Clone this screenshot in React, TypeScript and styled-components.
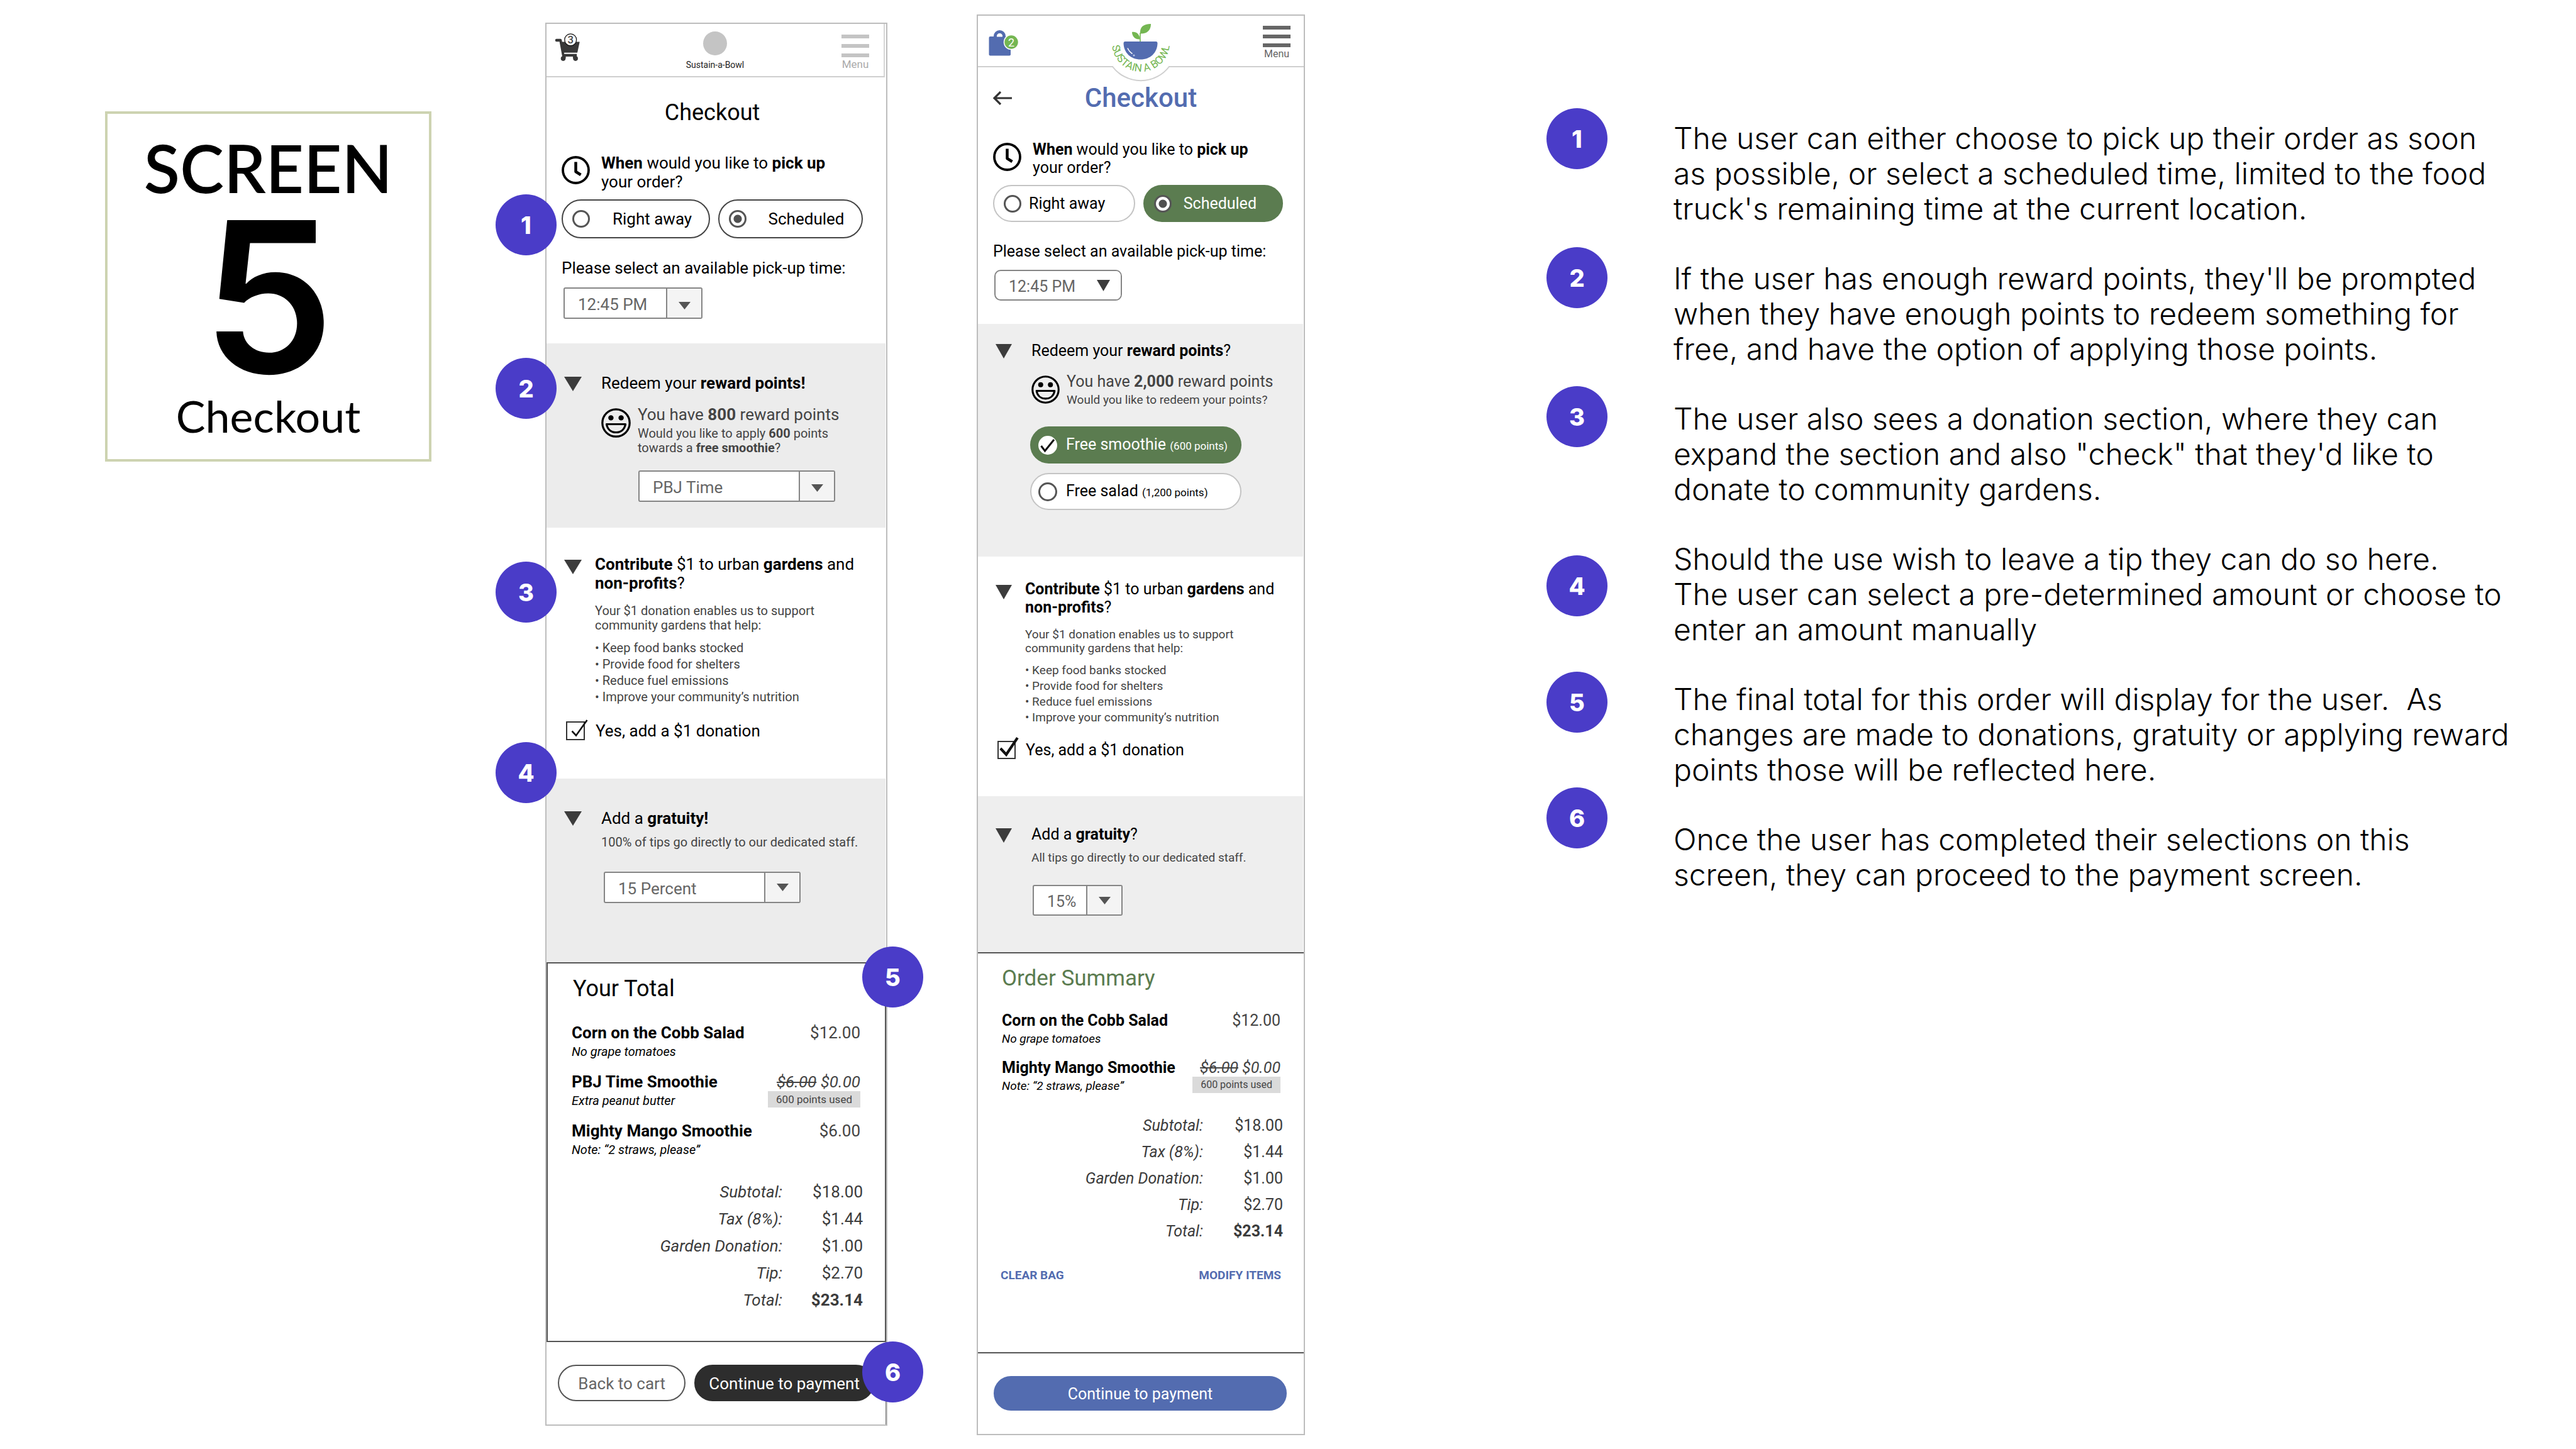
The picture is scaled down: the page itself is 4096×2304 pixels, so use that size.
import React, { useState } from 'react';
import styled, { createGlobalStyle, css } from 'styled-components';

const colors = {
  violet: '#4a3cc8',
  olive: '#cdd3b1',
  green: '#5b7c50',
  leaf: '#74b652',
  blue: '#536cb0',
  ink: '#3c3c3c',
  soft: '#444444',
  mid: '#666666',
  line: '#bdbdbd',
};

const GlobalStyle = createGlobalStyle`
  *, *::before, *::after { box-sizing: border-box; }
  body { margin: 0; background: #ffffff; color: #000000; font-family: Roboto, sans-serif; }
  h1, h2, h3, p, ul, ol { margin: 0; padding: 0; }
  ul, ol { list-style: none; }
  button, input, select { margin: 0; font-family: inherit; }
`;

/* ---------- page ---------- */

const Board = styled.main`
  display: grid;
  align-items: start;
  grid-template-columns:
    minmax(0, 167fr) minmax(0, 519fr) minmax(0, 181fr) minmax(0, 544fr) minmax(0, 142fr)
    minmax(0, 522fr) minmax(0, 384fr) minmax(0, 1637fr);
`;

const TitleCard = styled.header`
  grid-column: 2;
  margin-top: 177px;
  padding: 30px 0 29px;
  border: 4px solid ${colors.olive};
  text-align: center;
  font-family: Lato, sans-serif;
`;

const CardWord = styled.p`
  font-size: 105px;
  font-weight: 600;
  line-height: 110px;
`;

const CardNumber = styled.p`
  margin-top: 11px;
  font-family: Inter, sans-serif;
  font-size: 334px;
  font-weight: 600;
  line-height: 280px;
`;

const CardName = styled.h1`
  margin-top: 9px;
  font-size: 70px;
  font-weight: 400;
  line-height: 80px;
`;

const Badge = styled.span`
  display: flex;
  align-items: center;
  justify-content: center;
  width: 97px;
  height: 97px;
  border-radius: 50%;
  background: ${colors.violet};
  color: #ffffff;
  font-family: Inter, sans-serif;
  font-size: 38px;
  font-weight: 800;
`;

/* ---------- phone shell ---------- */

const Phone = styled.section<{ $column: number; $top: number; $compact?: boolean }>`
  position: relative;
  grid-column: ${(p) => p.$column};
  margin-top: ${(p) => p.$top}px;
  border: 2px solid ${colors.line};
  background: #ffffff;
  ${(p) =>
    p.$compact
      ? css`
          --text: 25px;
          --lead: 29px;
          --note: 19px;
          --note-lead: 22px;
          --bullet-lead: 25px;
          --tag: 16px;
          --total-lead: 42px;
          --toggle: 26px;
          --shade: #eeeeee;
        `
      : css`
          --text: 26px;
          --lead: 30px;
          --note: 20px;
          --note-lead: 23px;
          --bullet-lead: 26px;
          --tag: 17px;
          --total-lead: 43px;
          --toggle: 28px;
          --shade: #ececec;
        `}
  font-size: var(--text);
  line-height: var(--lead);
`;

const Pin = styled.div<{ $x: number; $y: number }>`
  position: absolute;
  left: ${(p) => p.$x}px;
  top: ${(p) => p.$y}px;
`;

const TopBar = styled.header<{ $compact?: boolean }>`
  position: relative;
  display: grid;
  grid-template-columns: 1fr auto 1fr;
  align-items: start;
  height: ${(p) => (p.$compact ? 82 : 85)}px;
  margin-right: ${(p) => (p.$compact ? 0 : 2)}px;
  padding: ${(p) => (p.$compact ? '16px 16px 0' : '12px 12px 0')};
  border-bottom: 2px solid #cfcfcf;
  border-right: ${(p) => (p.$compact ? '0' : '2px solid #d6d6d6')};
`;

const BagButton = styled.button<{ $drop: number }>`
  justify-self: start;
  margin-top: ${(p) => p.$drop}px;
  padding: 0;
  border: 0;
  background: none;
  line-height: 0;
`;

const Brand = styled.div`
  display: flex;
  flex-direction: column;
  align-items: center;
  gap: 7px;
  color: #222222;
  font-size: 14px;
  line-height: 16px;
`;

const BrandDot = styled.span`
  width: 38px;
  height: 38px;
  border-radius: 50%;
  background: #c4c4c4;
`;

const BrandBadge = styled.svg`
  position: absolute;
  top: 0;
  left: 50%;
  margin-left: -60px;
`;

const MenuButton = styled.button<{
  $tone: string;
  $ink: string;
  $gap: number;
  $drop: number;
  $inset: number;
  $size: number;
}>`
  grid-column: 3;
  justify-self: end;
  display: flex;
  flex-direction: column;
  align-items: center;
  gap: ${(p) => p.$gap}px;
  margin: ${(p) => p.$drop}px ${(p) => p.$inset}px 0 0;
  padding: 0;
  border: 0;
  background: none;
  color: ${(p) => p.$ink};
  font-size: ${(p) => p.$size}px;
  line-height: 18px;
  i {
    width: 44px;
    height: 6px;
    background: ${(p) => p.$tone};
  }
  span {
    margin-top: ${(p) => 2 - p.$gap}px;
  }
`;

const PlainTitle = styled.h2`
  margin-top: 35px;
  padding-right: 13px;
  text-align: center;
  font-size: 36px;
  font-weight: 400;
  line-height: 42px;
`;

const TitleRow = styled.div`
  display: grid;
  grid-template-columns: 1fr auto 1fr;
  align-items: center;
  margin-top: 26px;
  padding: 0 23px;
`;

const BlueTitle = styled.h2`
  color: ${colors.blue};
  font-size: 42px;
  font-weight: 500;
  line-height: 46px;
`;

const IconButton = styled.button`
  justify-self: start;
  padding: 0;
  border: 0;
  background: none;
  line-height: 0;
`;

/* ---------- sections ---------- */

const Pickup = styled.section<{ $bottom: number }>`
  padding: 44px 24px ${(p) => p.$bottom}px;
`;

const Ask = styled.div`
  display: flex;
  gap: 18px;
  svg {
    flex: none;
    margin-top: 4px;
  }
`;

const Choices = styled.div<{ $inset: number }>`
  display: flex;
  gap: 13px;
  margin: 13px ${(p) => p.$inset}px 32px 0;
`;

const Pill = styled.label<{ $grow: number; $gap: number; $solid?: boolean; $edge: string; $tall?: boolean }>`
  flex: ${(p) => p.$grow} 1 0;
  display: flex;
  align-items: center;
  gap: ${(p) => p.$gap}px;
  height: ${(p) => (p.$tall ? 62 : 59)}px;
  padding: 0 15px;
  border: 2px solid ${(p) => (p.$solid ? colors.green : p.$edge)};
  border-radius: 31px;
  background: ${(p) => (p.$solid ? colors.green : '#ffffff')};
  color: ${(p) => (p.$solid ? '#ffffff' : '#000000')};
  white-space: nowrap;
`;

const Radio = styled.input`
  appearance: none;
  flex: none;
  width: 28px;
  height: 28px;
  border: 3px solid #555555;
  border-radius: 50%;
  background: #ffffff;
  &:checked {
    background: radial-gradient(circle, #505050 6px, #ffffff 7px);
  }
`;

const SelectLabel = styled.label`
  display: block;
`;

const Picker = styled.div<{ $width: number; $top: number; $left: number; $round?: boolean; $low?: boolean }>`
  display: grid;
  grid-template-columns: minmax(0, 1fr) 56px;
  width: ${(p) => p.$width}px;
  height: calc(var(--lead) + 20px);
  margin: ${(p) => p.$top}px 0 0 ${(p) => p.$left}px;
  border: 2px solid #858585;
  border-radius: ${(p) => (p.$round ? 10 : 3)}px;
  background: #ffffff;
  overflow: hidden;
  select {
    grid-area: 1 / 1 / 2 / 3;
    appearance: none;
    width: 100%;
    padding: 3px 56px 0 21px;
    border: 0;
    background: transparent;
    color: ${colors.mid};
    font-size: var(--text);
  }
  span {
    grid-area: 1 / 2;
    display: flex;
    align-items: center;
    justify-content: center;
    padding-top: ${(p) => (p.$low ? 8 : 0)}px;
    border-left: ${(p) => (p.$round ? '0' : '2px solid #858585')};
    background: ${(p) => (p.$round ? '#ffffff' : '#f4f4f4')};
    pointer-events: none;
  }
`;

const Fold = styled.section<{ $top: number; $bottom: number; $gap: number; $shade?: boolean }>`
  display: grid;
  grid-template-columns: var(--toggle) minmax(0, 1fr);
  column-gap: ${(p) => p.$gap}px;
  align-items: start;
  margin-right: ${(p) => (p.$shade ? 1 : 0)}px;
  padding: ${(p) => p.$top}px 0 ${(p) => p.$bottom}px 28px;
  background: ${(p) => (p.$shade ? 'var(--shade)' : '#ffffff')};
`;

const Toggle = styled.button<{ $drop: number }>`
  margin-top: ${(p) => p.$drop}px;
  padding: 0;
  border: 0;
  background: none;
  line-height: 0;
`;

const FoldTitle = styled.h3`
  font-size: var(--text);
  font-weight: 400;
  line-height: var(--lead);
`;

const Small = styled.p<{ $top: number }>`
  margin-top: ${(p) => p.$top}px;
  color: ${colors.soft};
  font-size: var(--note);
  line-height: var(--note-lead);
`;

const Reward = styled.div`
  display: grid;
  grid-template-columns: auto minmax(0, 1fr);
  column-gap: 11px;
  align-items: start;
  margin-top: 20px;
  color: ${colors.soft};
  svg {
    margin-top: 5px;
  }
`;

const RewardChoices = styled.div`
  display: flex;
  flex-direction: column;
  gap: 15px;
  margin: 31px 98px 0 -2px;
  label {
    flex: none;
    padding: 0 11px;
  }
  small {
    font-size: 17px;
  }
`;

const RewardMark = styled.span`
  display: grid;
  width: 30px;
  height: 30px;
  input,
  svg {
    grid-area: 1 / 1;
    width: 30px;
    height: 30px;
    pointer-events: none;
  }
  input:checked {
    border-color: #ffffff;
    background: #ffffff;
  }
`;

const Bullets = styled.ul`
  margin-top: 11px;
  color: ${colors.soft};
  font-size: var(--note);
  line-height: var(--bullet-lead);
`;

const Consent = styled.label<{ $top: number; $gap: number }>`
  grid-column: 1 / 3;
  display: flex;
  align-items: center;
  gap: ${(p) => p.$gap}px;
  margin: ${(p) => p.$top}px 0 0 3px;
`;

const CheckMark = styled.span`
  display: grid;
  width: var(--lead);
  height: var(--lead);
  input,
  svg {
    grid-area: 1 / 1;
    width: var(--lead);
    height: var(--lead);
  }
  input {
    appearance: none;
    border: 2px solid #333333;
    background: #ffffff;
  }
  svg {
    overflow: visible;
    pointer-events: none;
  }
`;

/* ---------- order ---------- */

const Order = styled.section<{ $boxed?: boolean; $bottom: number }>`
  padding: ${(p) => (p.$boxed ? '19px 39px' : '20px 37px')} ${(p) => p.$bottom}px 38px;
  padding-bottom: ${(p) => p.$bottom}px;
  padding-right: ${(p) => (p.$boxed ? 39 : 37)}px;
  padding-left: 38px;
  border: solid #555555;
  border-width: ${(p) => (p.$boxed ? '2px' : '2px 0')};
`;

const OrderTitle = styled.h3<{ $green?: boolean }>`
  padding-left: ${(p) => (p.$green ? 0 : 2)}px;
  color: ${(p) => (p.$green ? colors.green : '#000000')};
  font-size: ${(p) => (p.$green ? 35 : 36)}px;
  font-weight: 400;
  line-height: ${(p) => (p.$green ? 40 : 42)}px;
`;

const Items = styled.ul<{ $top: number; $gap: number }>`
  display: grid;
  gap: ${(p) => p.$gap}px;
  margin-top: ${(p) => p.$top}px;
`;

const Item = styled.li`
  display: flex;
  justify-content: space-between;
  align-items: flex-start;
  white-space: nowrap;
  em {
    display: block;
    margin-top: 4px;
    font-size: var(--note);
    line-height: var(--note-lead);
  }
`;

const Price = styled.div<{ $free?: boolean }>`
  display: flex;
  flex-direction: column;
  align-items: flex-end;
  margin-bottom: -4px;
  color: ${colors.soft};
  font-style: ${(p) => (p.$free ? 'italic' : 'normal')};
`;

const Tag = styled.span`
  padding: 0 13px;
  background: #dadada;
  font-size: var(--tag);
  font-style: normal;
  line-height: 26px;
`;

const Totals = styled.table<{ $top: number }>`
  width: calc(100% + 4px);
  margin: ${(p) => p.$top}px -4px 0 0;
  border-collapse: collapse;
  color: ${colors.ink};
  line-height: var(--total-lead);
  th,
  td {
    padding: 0;
    text-align: right;
    font-weight: 400;
  }
  th {
    font-style: italic;
  }
  td {
    width: calc(var(--lead) + 98px);
  }
  tr:last-child td {
    font-weight: 700;
  }
`;

const OrderLinks = styled.nav`
  display: flex;
  justify-content: space-between;
  margin: 38px -1px 0 -2px;
  font-size: 19px;
  font-weight: 700;
  line-height: 22px;
  a {
    color: ${colors.blue};
    text-decoration: none;
  }
`;

const Footer = styled.footer<{ $boxed?: boolean }>`
  display: flex;
  gap: 14px;
  padding: ${(p) => (p.$boxed ? '36px 18px 37px' : '36px 27px 37px 25px')};
  border-right: ${(p) => (p.$boxed ? '1px solid #777777' : '0')};
`;

const ActionButton = styled.button<{ $grow: number; $fill: string; $ink: string; $edge?: string }>`
  flex: ${(p) => p.$grow} 1 0;
  height: calc(var(--lead) * 3 - 32px);
  padding: 2px 0 0;
  border: 2px solid ${(p) => p.$edge ?? p.$fill};
  border-radius: 30px;
  background: ${(p) => p.$fill};
  color: ${(p) => p.$ink};
  font-size: var(--text);
  white-space: nowrap;
`;

/* ---------- legend ---------- */

const Legend = styled.aside`
  grid-column: 8;
  display: grid;
  grid-template-columns: 97px minmax(0, 1fr);
  column-gap: 105px;
  align-items: start;
  margin-top: 172px;
`;

const BadgeList = styled.ol`
  display: flex;
  flex-direction: column;
`;

const BadgeItem = styled.li<{ $gap: number }>`
  margin-top: ${(p) => p.$gap}px;
`;

const Notes = styled.div`
  display: grid;
  gap: 55px;
  padding-top: 20px;
  font-family: Inter, sans-serif;
  font-size: 48px;
  font-weight: 300;
  line-height: 56px;
  white-space: pre;
`;

/* ---------- drawings ---------- */

const Triangle = ({ w, h, tone = colors.ink }: { w: number; h: number; tone?: string }) => (
  <svg width={w} height={h} viewBox="0 0 10 10" preserveAspectRatio="none" aria-hidden="true">
    <path d="M0 0H10L5 10z" fill={tone} />
  </svg>
);

const ClockIcon = () => (
  <svg width="45" height="45" viewBox="0 0 45 45" fill="none" stroke="#000" aria-hidden="true">
    <circle cx="22.5" cy="22.5" r="20.5" strokeWidth="3.8" />
    <path d="M22.5 9.5V25L30.5 30" strokeWidth="4.5" strokeLinejoin="round" />
  </svg>
);

const SmileIcon = ({ size }: { size: number }) => (
  <svg width={size} height={size} viewBox="0 0 47 47" fill="none" stroke="#000" strokeWidth="3.2" aria-hidden="true">
    <circle cx="23.5" cy="23.5" r="21.7" />
    <path d="M8.5 25.5H38.5C37 34 31 38.5 23.5 38.5S10 34 8.5 25.5z" strokeLinejoin="round" />
    <g fill="#000" stroke="none">
      <circle cx="15.4" cy="15.4" r="4.2" />
      <circle cx="31.6" cy="15.4" r="4.2" />
    </g>
  </svg>
);

const CartIcon = () => (
  <svg width="42" height="46" viewBox="50 85 165 180" aria-hidden="true">
    <g fill="#383838">
      <path d="M65 123H90q7 0 8 7l2 12H210L196 207Q195 209 192 209H113V217H192V234H196V246H96L101 232L84 141H65Q57 141 57 132T65 123z" />
      <circle cx="107" cy="246" r="15" />
      <circle cx="184" cy="246" r="15" />
    </g>
    <path d="M123 234H168V262H123z" fill="#fff" />
    <circle cx="153" cy="129" r="37" fill="#fff" stroke="#111" strokeWidth="5" />
    <text x="153" y="152" textAnchor="middle" fontFamily="Roboto, sans-serif" fontSize="66" fontWeight="500" fill="#444">
      3
    </text>
  </svg>
);

const BagIcon = () => (
  <svg width="52" height="44" viewBox="0 0 52 44" aria-hidden="true">
    <rect x="1.5" y="12" width="34.5" height="30.5" rx="2" fill={colors.blue} />
    <path d="M11.5 13V11.5a7 7 0 0 1 14 0V13" fill="none" stroke={colors.blue} strokeWidth="5" />
    <path d="M14 12.5q0-5 4.5-5t4.5 5z" fill="#fff" />
    <circle cx="37" cy="21" r="11.5" fill={colors.leaf} stroke="#fff" strokeWidth="1.5" />
    <text x="37" y="27.5" textAnchor="middle" fontFamily="Roboto, sans-serif" fontSize="18" fill="#fff">
      2
    </text>
  </svg>
);

const BowlLogo = () => (
  <BrandBadge width="120" height="106" viewBox="0 0 120 106" role="img" aria-label="Sustain a Bowl">
    <path d="M16 78H104V82H16z" fill="#fff" />
    <path d="M15 81A56.6 56.6 0 0 0 105 81" fill="#fff" stroke="#cfcfcf" strokeWidth="2" />
    <path d="M35 41H84q2.5 0 2.5 3C86 59 75 69.5 59.5 69.5S33 59 32.5 44q0-3 2.5-3z" fill={colors.blue} />
    <path d="M39 51.5Q41 56.5 46.5 60.5" fill="none" stroke="#fff" strokeWidth="1.6" />
    <circle cx="49" cy="63" r="1.5" fill="#b9c6e6" />
    <path d="M59 27V41" stroke={colors.leaf} strokeWidth="1.6" />
    <path d="M59 28.5C58 18 64 13 76 13C76 23 70 29 59 28.5z" fill={colors.leaf} />
    <path d="M46 26c7-1 12.5 4 12.5 11.5C51 38 46 33 46 26z" fill={colors.leaf} />
    <path id="bowl-arc" d="M14 43A46 46 0 0 0 106 43" fill="none" />
    <text fontFamily="Roboto, sans-serif" fontSize="17" fill={colors.leaf} textAnchor="middle">
      <textPath href="#bowl-arc" startOffset="50%">
        SUSTAIN A BOWL
      </textPath>
    </text>
  </BrandBadge>
);

const BackArrow = () => (
  <svg width="32" height="22" viewBox="0 0 32 22" fill="none" stroke="#333" strokeWidth="3.2" aria-hidden="true">
    <path d="M31 11H3M13 1L3 11L13 21" />
  </svg>
);

/* ---------- shared parts ---------- */

const Dropdown = ({
  id,
  options,
  arrow = [19, 12],
  ...box
}: {
  id: string;
  options: string[];
  arrow?: number[];
  $width: number;
  $top: number;
  $left: number;
  $round?: boolean;
  $low?: boolean;
}) => (
  <Picker {...box}>
    <select id={id} aria-label={id}>
      {options.map((o) => (
        <option key={o}>{o}</option>
      ))}
    </select>
    <span>
      <Triangle w={arrow[0]} h={arrow[1]} tone={box.$round ? colors.ink : '#555555'} />
    </span>
  </Picker>
);

const Menu = (props: {
  $tone: string;
  $ink: string;
  $gap: number;
  $drop: number;
  $inset: number;
  $size: number;
}) => (
  <MenuButton type="button" {...props}>
    <i />
    <i />
    <i />
    <span>Menu</span>
  </MenuButton>
);

const Question = () => (
  <Ask>
    <ClockIcon />
    <p>
      <b>When</b> would you like to <b>pick up</b>
      <br />
      your order?
    </p>
  </Ask>
);

const GardenText = () => (
  <div>
    <FoldTitle>
      <b>Contribute</b> $1 to urban <b>gardens</b> and
      <br />
      <b>non-profits</b>?
    </FoldTitle>
    <Small $top={18}>
      Your $1 donation enables us to support
      <br />
      community gardens that help:
    </Small>
    <Bullets>
      <li>• Keep food banks stocked</li>
      <li>• Provide food for shelters</li>
      <li>• Reduce fuel emissions</li>
      <li>• Improve your community’s nutrition</li>
    </Bullets>
  </div>
);

const Donation = ({ top, gap, path, weight }: { top: number; gap: number; path: string; weight: number }) => {
  const [on, setOn] = useState(true);
  return (
    <Consent $top={top} $gap={gap}>
      <CheckMark>
        <input type="checkbox" checked={on} onChange={() => setOn(!on)} />
        {on && (
          <svg viewBox="0 0 30 30" fill="none" stroke="#111" strokeWidth={weight}>
            <path d={path} />
          </svg>
        )}
      </CheckMark>
      Yes, add a $1 donation
    </Consent>
  );
};

type Line = { name: string; note: string; price: string; was?: string };

const OrderItems = ({ lines, top, gap }: { lines: Line[]; top: number; gap: number }) => (
  <Items $top={top} $gap={gap}>
    {lines.map((l) => (
      <Item key={l.name}>
        <div>
          <b>{l.name}</b>
          <em>{l.note}</em>
        </div>
        <Price $free={!!l.was}>
          <span>
            {l.was && <s>{l.was}</s>} {l.price}
          </span>
          {l.was && <Tag>600 points used</Tag>}
        </Price>
      </Item>
    ))}
  </Items>
);

const totals = [
  ['Subtotal:', '$18.00'],
  ['Tax (8%):', '$1.44'],
  ['Garden Donation:', '$1.00'],
  ['Tip:', '$2.70'],
  ['Total:', '$23.14'],
];

const TotalsTable = ({ top }: { top: number }) => (
  <Totals $top={top}>
    <tbody>
      {totals.map(([label, value]) => (
        <tr key={label}>
          <th scope="row">{label}</th>
          <td>{value}</td>
        </tr>
      ))}
    </tbody>
  </Totals>
);

/* ---------- screens ---------- */

const salad = { name: 'Corn on the Cobb Salad', note: 'No grape tomatoes', price: '$12.00' };
const mango = { name: 'Mighty Mango Smoothie', note: 'Note: “2 straws, please”' };

const pins = [
  [-81, 271],
  [-81, 531],
  [-81, 855],
  [-81, 1142],
  [502, 1467],
  [502, 2095],
];

const Wireframe = () => (
  <Phone $column={4} $top={36}>
    <TopBar>
      <BagButton type="button" $drop={2} aria-label="Cart">
        <CartIcon />
      </BagButton>
      <Brand>
        <BrandDot />
        Sustain-a-Bowl
      </Brand>
      <Menu $tone="#c4c4c4" $ink="#aaaaaa" $gap={9} $drop={5} $inset={11} $size={17} />
    </TopBar>
    <PlainTitle>Checkout</PlainTitle>
    <Pickup $bottom={39}>
      <Question />
      <Choices $inset={13}>
        <Pill $grow={236} $gap={36} $edge="#444444" $tall>
          <Radio type="radio" name="wire-when" />
          Right away
        </Pill>
        <Pill $grow={230} $gap={35} $edge="#444444" $tall>
          <Radio type="radio" name="wire-when" defaultChecked />
          Scheduled
        </Pill>
      </Choices>
      <SelectLabel htmlFor="wire-time">Please select an available pick-up time:</SelectLabel>
      <Dropdown id="wire-time" options={['12:45 PM']} $width={221} $top={16} $left={3} $low />
    </Pickup>
    <Fold $top={48} $bottom={41} $gap={31} $shade>
      <Toggle type="button" $drop={5} aria-label="Rewards">
        <Triangle w={28} h={23} />
      </Toggle>
      <div>
        <FoldTitle>
          Redeem your <b>reward points!</b>
        </FoldTitle>
        <Reward>
          <SmileIcon size={47} />
          <div>
            <p>
              You have <b>800</b> reward points
            </p>
            <Small $top={4}>
              Would you like to apply <b>600</b> points
              <br />
              towards a <b>free smoothie</b>?
            </Small>
            <Dropdown id="wire-reward" options={['PBJ Time']} $width={313} $top={24} $left={1} />
          </div>
        </Reward>
      </div>
    </Fold>
    <Fold $top={43} $bottom={61} $gap={21}>
      <Toggle type="button" $drop={8} aria-label="Donation">
        <Triangle w={28} h={23} />
      </Toggle>
      <GardenText />
      <Donation top={26} gap={17} path="M9.5 15.5L16 22.5L33.5 -2" weight={2.6} />
    </Fold>
    <Fold $top={48} $bottom={94} $gap={31} $shade>
      <Toggle type="button" $drop={4} aria-label="Gratuity">
        <Triangle w={28} h={23} />
      </Toggle>
      <div>
        <FoldTitle>
          Add a <b>gratuity!</b>
        </FoldTitle>
        <Small $top={12}>100% of tips go directly to our dedicated staff.</Small>
        <Dropdown id="wire-tip" options={['15 Percent']} $width={313} $top={35} $left={4} />
      </div>
    </Fold>
    <Order $boxed $bottom={43}>
      <OrderTitle>Your Total</OrderTitle>
      <OrderItems
        top={34}
        gap={21}
        lines={[
          salad,
          { name: 'PBJ Time Smoothie', note: 'Extra peanut butter', price: '$0.00', was: '$6.00' },
          { ...mango, price: '$6.00' },
        ]}
      />
      <TotalsTable top={34} />
    </Order>
    <Footer $boxed>
      <ActionButton type="button" $grow={203} $fill="#ffffff" $ink={colors.mid} $edge="#555555">
        Back to cart
      </ActionButton>
      <ActionButton type="button" $grow={287} $fill="#2d2d2d" $ink="#ffffff">
        Continue to payment
      </ActionButton>
    </Footer>
    {pins.map(([x, y], i) => (
      <Pin key={i} $x={x} $y={y}>
        <Badge>{i + 1}</Badge>
      </Pin>
    ))}
  </Phone>
);

const Mockup = () => (
  <Phone $column={6} $top={23} $compact>
    <TopBar $compact>
      <BagButton type="button" $drop={5} aria-label="Bag">
        <BagIcon />
      </BagButton>
      <BowlLogo />
      <Menu $tone={colors.mid} $ink={colors.mid} $gap={8} $drop={0} $inset={5} $size={16} />
    </TopBar>
    <TitleRow>
      <IconButton type="button" aria-label="Back">
        <BackArrow />
      </IconButton>
      <BlueTitle>Checkout</BlueTitle>
    </TitleRow>
    <Pickup $bottom={37}>
      <Question />
      <Choices $inset={9}>
        <Pill $grow={226} $gap={12} $edge="#c4c4c4">
          <Radio type="radio" name="mock-when" />
          Right away
        </Pill>
        <Pill $grow={222} $gap={19} $edge="#c4c4c4" $solid>
          <Radio type="radio" name="mock-when" defaultChecked />
          Scheduled
        </Pill>
      </Choices>
      <SelectLabel htmlFor="mock-time">Please select an available pick-up time:</SelectLabel>
      <Dropdown id="mock-time" options={['12:45 PM']} arrow={[21, 18]} $width={203} $top={15} $left={2} $round />
    </Pickup>
    <Fold $top={28} $bottom={74} $gap={31} $shade>
      <Toggle type="button" $drop={4} aria-label="Rewards">
        <Triangle w={26} h={23} />
      </Toggle>
      <div>
        <FoldTitle>
          Redeem your <b>reward points</b>?
        </FoldTitle>
        <Reward>
          <SmileIcon size={45} />
          <div>
            <p>
              You have <b>2,000</b> reward points
            </p>
            <Small $top={4}>Would you like to redeem your points?</Small>
          </div>
        </Reward>
        <RewardChoices>
          <Pill $grow={1} $gap={14} $edge="#c4c4c4" $solid>
            <RewardMark>
              <Radio type="radio" name="mock-reward" defaultChecked />
              <svg viewBox="0 0 30 30" fill="none" stroke="#111" strokeWidth="3">
                <path d="M4.5 16L10.5 24L25 6" />
              </svg>
            </RewardMark>
            <span>
              Free smoothie <small>(600 points)</small>
            </span>
          </Pill>
          <Pill $grow={1} $gap={14} $edge="#c4c4c4">
            <RewardMark>
              <Radio type="radio" name="mock-reward" />
            </RewardMark>
            <span>
              Free salad <small>(1,200 points)</small>
            </span>
          </Pill>
        </RewardChoices>
      </div>
    </Fold>
    <Fold $top={37} $bottom={59} $gap={21}>
      <Toggle type="button" $drop={8} aria-label="Donation">
        <Triangle w={26} h={23} />
      </Toggle>
      <GardenText />
      <Donation top={25} gap={16} path="M5 12.5L14.5 22.5L33 -5" weight={4.4} />
    </Fold>
    <Fold $top={46} $bottom={58} $gap={31} $shade>
      <Toggle type="button" $drop={5} aria-label="Gratuity">
        <Triangle w={26} h={23} />
      </Toggle>
      <div>
        <FoldTitle>
          Add a <b>gratuity</b>?
        </FoldTitle>
        <Small $top={12}>All tips go directly to our dedicated staff.</Small>
        <Dropdown id="mock-tip" options={['15%']} $width={143} $top={32} $left={2} />
      </div>
    </Fold>
    <Order $bottom={111}>
      <OrderTitle $green>Order Summary</OrderTitle>
      <OrderItems top={32} gap={20} lines={[salad, { ...mango, price: '$0.00', was: '$6.00' }]} />
      <TotalsTable top={31} />
      <OrderLinks>
        <a href="#clear">CLEAR BAG</a>
        <a href="#modify">MODIFY ITEMS</a>
      </OrderLinks>
    </Order>
    <Footer>
      <ActionButton type="button" $grow={1} $fill={colors.blue} $ink="#ffffff">
        Continue to payment
      </ActionButton>
    </Footer>
  </Phone>
);

const notes = [
  'The user can either choose to pick up their order as soon\nas possible, or select a scheduled time, limited to the food\ntruck\'s remaining time at the current location.',
  'If the user has enough reward points, they\'ll be prompted\nwhen they have enough points to redeem something for\nfree, and have the option of applying those points.',
  'The user also sees a donation section, where they can\nexpand the section and also "check" that they\'d like to\ndonate to community gardens.',
  'Should the use wish to leave a tip they can do so here.\nThe user can select a pre-determined amount or choose to\nenter an amount manually',
  'The final total for this order will display for the user.  As\nchanges are made to donations, gratuity or applying reward\npoints those will be reflected here.',
  'Once the user has completed their selections on this\nscreen, they can proceed to the payment screen.',
];

export default function App() {
  return (
    <>
      <GlobalStyle />
      <Board>
        <TitleCard>
          <CardWord>SCREEN</CardWord>
          <CardNumber>5</CardNumber>
          <CardName>Checkout</CardName>
        </TitleCard>
        <Wireframe />
        <Mockup />
        <Legend>
          <BadgeList>
            {[0, 124, 124, 172, 88, 87].map((gap, i) => (
              <BadgeItem key={i} $gap={gap}>
                <Badge>{i + 1}</Badge>
              </BadgeItem>
            ))}
          </BadgeList>
          <Notes>
            {notes.map((n) => (
              <p key={n}>{n}</p>
            ))}
          </Notes>
        </Legend>
      </Board>
    </>
  );
}
